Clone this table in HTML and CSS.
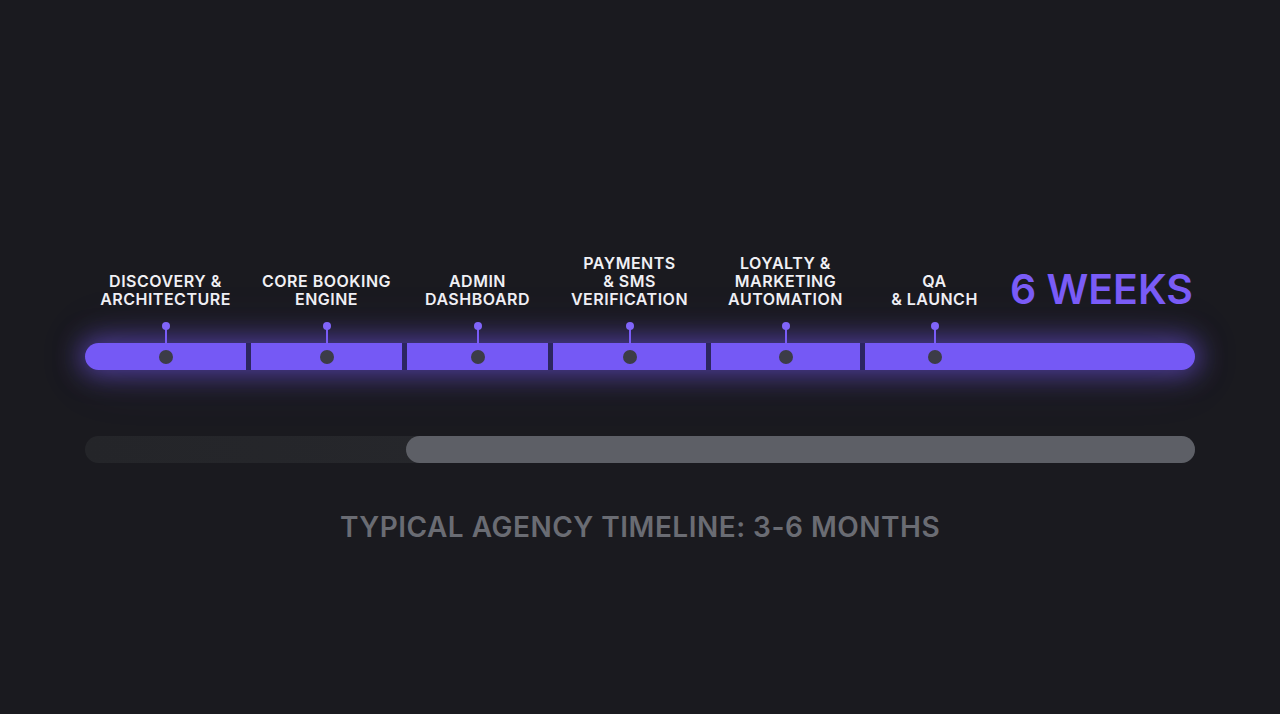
FILE: index.html
```html
<!DOCTYPE html>
<html lang="en">
<head>
<meta charset="utf-8">
<title>Timeline</title>
<link rel="stylesheet" href="styles.css">
</head>
<body>
<main class="stage">
  <section class="timeline">
    <div class="labels">
      <div class="label w1">DISCOVERY &amp;<br>ARCHITECTURE</div>
      <div class="label w2">CORE BOOKING<br>ENGINE</div>
      <div class="label w3">ADMIN<br>DASHBOARD</div>
      <div class="label w4">PAYMENTS<br>&amp; SMS<br>VERIFICATION</div>
      <div class="label w5">LOYALTY &amp;<br>MARKETING<br>AUTOMATION</div>
      <div class="label w6">QA<br>&amp; LAUNCH</div>
      <div class="total">6 WEEKS</div>
    </div>
    <div class="bar">
      <div class="seg w1 first"><span class="dot"></span></div>
      <div class="seg w2"><span class="dot"></span></div>
      <div class="seg w3"><span class="dot"></span></div>
      <div class="seg w4"><span class="dot"></span></div>
      <div class="seg w5"><span class="dot"></span></div>
      <div class="seg last"><div class="w6 slot"><span class="dot"></span></div></div>
    </div>
    <div class="agency-track">
      <div class="agency-fill" style="width:71.08%"></div>
    </div>
    <p class="agency-text">TYPICAL AGENCY TIMELINE: 3-6 MONTHS</p>
  </section>
</main>
</body>
</html>
```

FILE: styles.css
```css
* { box-sizing: border-box; }
html, body {
  margin: 0;
  padding: 0;
  height: 100%;
}
body {
  background: #1a1a1f;
  font-family: Inter, "Noto Sans", "Liberation Sans", sans-serif;
  overflow: hidden;
}
.stage {
  height: 714px;
  display: flex;
  justify-content: center;
  padding-top: 254px;
}
.timeline {
  width: 1110px;
  display: flex;
  flex-direction: column;
}
.labels {
  display: flex;
  gap: 5px;
  align-items: flex-end;
  height: 54px;
}
.w1 { width: 161px; flex: none; }
.w2 { width: 151px; flex: none; }
.w3 { width: 141px; flex: none; }
.w4 { width: 153px; flex: none; }
.w5 { width: 149px; flex: none; }
.w6 { width: 139px; flex: none; }
.label {
  color: #f0f0f4;
  font-size: 16px;
  line-height: 18px;
  font-weight: 600;
  letter-spacing: 0.5px;
  text-align: center;
  white-space: nowrap;
  display: flex;
  justify-content: center;
}
.total {
  flex: 1;
  text-align: right;
  color: #7a5cf7;
  font-size: 41px;
  line-height: 41px;
  font-weight: 600;
  letter-spacing: 0;
  margin-bottom: -2px;
  padding-right: 2px;
  white-space: nowrap;
}
.bar {
  margin-top: 35px;
  height: 27px;
  display: flex;
  gap: 5px;
  background: #2c2660;
  border-radius: 14px;
  box-shadow: 0 0 26px 5px rgba(118, 88, 245, 0.55), 0 0 60px rgba(118, 88, 245, 0.15);
}
.seg {
  background: #7559f5;
  height: 27px;
  display: flex;
  align-items: center;
  justify-content: center;
}
.seg.first { border-radius: 14px 0 0 14px; }
.seg.last {
  flex: 1;
  justify-content: flex-start;
  border-radius: 0 14px 14px 0;
}
.slot {
  height: 27px;
  display: flex;
  align-items: center;
  justify-content: center;
}
.dot {
  position: relative;
  width: 14px;
  height: 14px;
  border-radius: 50%;
  background: #3c3c47;
}
.dot::before {
  content: "";
  position: absolute;
  left: 6px;
  top: -24px;
  width: 2px;
  height: 18px;
  background: #7a5cf7;
}
.dot::after {
  content: "";
  position: absolute;
  left: 3px;
  top: -28px;
  width: 8px;
  height: 8px;
  border-radius: 50%;
  background: #8064fa;
}
.agency-track {
  margin-top: 66px;
  height: 27px;
  border-radius: 14px;
  background: linear-gradient(90deg, #242529 0%, #2a2b30 100%);
  display: flex;
  justify-content: flex-end;
}
.agency-fill {
  height: 27px;
  border-radius: 14px;
  background: #5d5f66;
}
.agency-text {
  margin: 47px 0 0;
  text-align: center;
  color: #6a6c73;
  font-size: 28px;
  line-height: 34px;
  font-weight: 600;
  letter-spacing: 0.5px;
}
```
